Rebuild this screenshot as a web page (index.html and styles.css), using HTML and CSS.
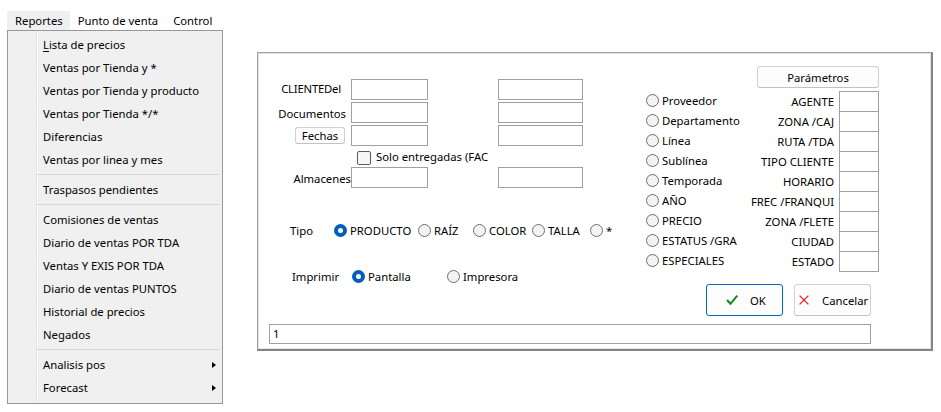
FILE: index.html
```html
<!DOCTYPE html>
<html lang="es">
<head>
<meta charset="utf-8">
<title>Reportes</title>
<link rel="stylesheet" href="styles.css">
</head>
<body>
<nav class="menubar">
  <span class="mb-item active">Reportes</span>
  <span class="mb-item">Punto de venta</span>
  <span class="mb-item">Control</span>
</nav>

<ul class="dropdown">
  <li class="mi"><span><u>L</u>ista de precios</span></li>
  <li class="mi">Ventas por Tienda y *</li>
  <li class="mi">Ventas por Tienda y producto</li>
  <li class="mi">Ventas por Tienda */*</li>
  <li class="mi">Diferencias</li>
  <li class="mi">Ventas por linea y mes</li>
  <li class="sep"></li>
  <li class="mi">Traspasos pendientes</li>
  <li class="sep"></li>
  <li class="mi">Comisiones de ventas</li>
  <li class="mi">Diario de ventas POR TDA</li>
  <li class="mi">Ventas Y EXIS POR TDA</li>
  <li class="mi">Diario de ventas PUNTOS</li>
  <li class="mi">Historial de precios</li>
  <li class="mi">Negados</li>
  <li class="sep"></li>
  <li class="mi sub">Analisis pos</li>
  <li class="mi sub">Forecast</li>
</ul>

<div class="dialog">
  <div class="dlg-top">
    <div class="dlg-left">
      <div class="filters">
        <span class="lbl l-cliente">CLIENTEDel</span><span class="tb"></span><span class="tb c4"></span>
        <span class="lbl l-docs">Documentos</span><span class="tb"></span><span class="tb c4"></span>
        <span class="lbl l-fechas"><span class="btn btn-fechas">Fechas</span></span><span class="tb"></span><span class="tb c4"></span>
        <span class="chk-row"><span class="chk"></span><span class="chk-text">Solo entregadas (FAC</span></span>
        <span class="lbl l-alm">Almacenes</span><span class="tb"></span><span class="tb c4"></span>
      </div>
      <div class="opt-row tipo">
        <span class="row-lbl">Tipo</span>
        <span class="opt w-prod"><span class="rb on"></span>PRODUCTO</span>
        <span class="opt w-raiz"><span class="rb"></span>RAÍZ</span>
        <span class="opt w-color"><span class="rb"></span>COLOR</span>
        <span class="opt w-talla"><span class="rb"></span>TALLA</span>
        <span class="opt"><span class="rb"></span>*</span>
      </div>
      <div class="opt-row imprimir">
        <span class="row-lbl">Imprimir</span>
        <span class="opt w-pant"><span class="rb on"></span>Pantalla</span>
        <span class="opt"><span class="rb"></span>Impresora</span>
      </div>
    </div>
    <div class="dlg-right">
      <div class="right-top">
        <div class="radios">
          <span class="opt"><span class="rb"></span>Proveedor</span>
          <span class="opt"><span class="rb"></span>Departamento</span>
          <span class="opt"><span class="rb"></span>Línea</span>
          <span class="opt"><span class="rb"></span>Sublínea</span>
          <span class="opt"><span class="rb"></span>Temporada</span>
          <span class="opt"><span class="rb"></span>AÑO</span>
          <span class="opt"><span class="rb"></span>PRECIO</span>
          <span class="opt"><span class="rb"></span>ESTATUS /GRA</span>
          <span class="opt"><span class="rb"></span>ESPECIALES</span>
        </div>
        <div class="params">
          <span class="btn btn-param">Parámetros</span>
          <div class="param-grid">
            <span class="plbl">AGENTE</span><span class="pbox"></span>
            <span class="plbl">ZONA /CAJ</span><span class="pbox"></span>
            <span class="plbl">RUTA /TDA</span><span class="pbox"></span>
            <span class="plbl">TIPO CLIENTE</span><span class="pbox"></span>
            <span class="plbl">HORARIO</span><span class="pbox"></span>
            <span class="plbl">FREC /FRANQUI</span><span class="pbox"></span>
            <span class="plbl">ZONA /FLETE</span><span class="pbox"></span>
            <span class="plbl">CIUDAD</span><span class="pbox"></span>
            <span class="plbl">ESTADO</span><span class="pbox"></span>
          </div>
        </div>
      </div>
      <div class="buttons">
        <span class="btn big ok">
          <svg class="ico-ok" width="12" height="10" viewBox="0 0 12 10"><path d="M1 5 L4.5 8.8 L11.3 0.6" fill="none" stroke="#138a13" stroke-width="2"/></svg>
          <span class="ok-text">OK</span>
        </span>
        <span class="btn big cancel">
          <svg class="ico-x" width="10" height="10" viewBox="0 0 10 10"><path d="M0.6 0.6 L9.4 9.4 M9.4 0.6 L0.6 9.4" fill="none" stroke="#e3211c" stroke-width="1.3"/></svg>
          <span class="cancel-text">Cancelar</span>
        </span>
      </div>
    </div>
  </div>
  <div class="status">1</div>
</div>
</body>
</html>
```
FILE: styles.css
```css
* { box-sizing: border-box; }
html, body { margin: 0; padding: 0; }
body {
  width: 941px;
  height: 412px;
  position: relative;
  overflow: hidden;
  background: #fff;
  color: #000;
  font-family: "Noto Sans", "DejaVu Sans", sans-serif;
  font-size: 11.3px;
}

/* ---------- menu bar ---------- */
.menubar {
  display: flex;
  height: 30px;
  padding: 11px 0 0 7px;
}
.mb-item {
  height: 19px;
  line-height: 19px;
  padding: 0 7px 0 8px;
  white-space: nowrap;
}
.mb-item.active { background: #f0f0f0; }

/* ---------- dropdown ---------- */
.dropdown {
  position: absolute;
  left: 7px;
  top: 30px;
  width: 216px;
  margin: 0;
  padding: 2px 0 4px;
  list-style: none;
  border: 1px solid #979797;
  background:
    linear-gradient(to right, transparent 28px, #e2e2e2 28px, #e2e2e2 29px, #fff 29px, #fff 30px, transparent 30px) no-repeat 0 1px / 100% calc(100% - 2px),
    #f0f0f0;
}
.mi {
  height: 23px;
  display: flex;
  align-items: center;
  padding-left: 35px;
  white-space: nowrap;
}
.mi u { text-decoration-thickness: 1px; text-underline-offset: 2px; }
.mi.sub::after {
  content: "";
  margin-left: auto;
  margin-right: 6px;
  border-left: 4px solid #000;
  border-top: 3.5px solid transparent;
  border-bottom: 3.5px solid transparent;
}
.sep {
  height: 7px;
  margin: 0 2px 0 29px;
  background: linear-gradient(transparent 3px, #d7d7d7 3px, #d7d7d7 4px, transparent 4px);
}

/* ---------- dialog ---------- */
.dialog {
  position: absolute;
  left: 257px;
  top: 52px;
  width: 676px;
  height: 299px;
  background: #fff;
  border-style: solid;
  border-width: 1px 2px 2px 1px;
  border-color: #a0a0a0 #858585 #858585 #a0a0a0;
  box-shadow: inset 1px 1px 0 #e3e3e3, inset -1px -1px 0 #e3e3e3;
}
.dlg-top { display: flex; align-items: flex-start; }
.dlg-left { width: 388px; flex: none; }

.filters {
  display: grid;
  grid-template-columns: 82px 77px 70px 85px;
  grid-template-rows: 21px 21px 21px 17px 21px;
  row-gap: 2px;
  margin: 26px 0 0 11px;
}
.lbl {
  display: flex;
  align-items: center;
  justify-content: flex-end;
  white-space: nowrap;
}
.l-cliente { margin-right: 10px; padding-bottom: 3px; letter-spacing: -0.2px; }
.l-docs { margin-right: 5px; padding-top: 1px; }
.l-fechas { margin-right: 6px; }
.l-alm { margin-right: 0; padding-top: 1px; }
.tb { border: 1px solid #a0a0a0; background: #fff; }
.c4 { grid-column: 4; }

.chk-row {
  grid-column: 2 / 5;
  display: flex;
  align-items: flex-end;
  padding-left: 6px;
  white-space: nowrap;
}
.chk {
  width: 14px;
  height: 14px;
  border: 1px solid #5c5c5c;
  border-radius: 2px;
  background: #f6f6f6;
  flex: none;
}
.chk-text { margin-left: 5px; line-height: 16px; }

.btn {
  display: inline-flex;
  align-items: center;
  justify-content: center;
  background: #fdfdfd;
  border: 1px solid #d0d0d0;
  border-bottom-color: #c2c2c2;
  border-radius: 3px;
  white-space: nowrap;
}
.btn-fechas { width: 50px; height: 17px; line-height: 15px; }

.opt-row {
  display: flex;
  align-items: center;
  height: 20px;
  white-space: nowrap;
}
.tipo { margin-top: 32px; padding-left: 32px; }
.tipo .row-lbl { width: 44px; }
.imprimir { margin-top: 26px; padding-left: 34px; }
.imprimir .row-lbl { width: 60px; }

.opt {
  display: flex;
  align-items: center;
  gap: 3px;
  white-space: nowrap;
}
.w-prod { width: 84px; }
.w-raiz { width: 55px; }
.w-color { width: 59px; }
.w-talla { width: 58px; }
.w-pant { width: 95px; }

.rb {
  width: 13px;
  height: 13px;
  border-radius: 50%;
  border: 1px solid #6e6e6e;
  background: #f3f3f3;
  flex: none;
}
.rb.on {
  border: 4px solid #005fb8;
  background: #fff;
}

/* right side */
.dlg-right { display: flex; flex-direction: column; }
.right-top { display: flex; align-items: flex-start; }
.radios {
  width: 111px;
  margin-top: 37px;
  display: flex;
  flex-direction: column;
}
.radios .opt {
  width: 95px;
  height: 20px;
  overflow: hidden;
}
.params { width: 122px; margin-top: 13px; }
.btn-param { width: 122px; height: 22px; }
.param-grid {
  display: grid;
  grid-template-columns: 82px 40px;
  grid-auto-rows: 20px;
  margin-top: 3px;
}
.plbl {
  display: flex;
  align-items: center;
  justify-content: flex-end;
  padding: 1px 5px 0 0;
  white-space: nowrap;
}
.pbox { height: 21px; border: 1px solid #a0a0a0; }

.buttons {
  display: flex;
  gap: 11px;
  margin: 13px 0 0 60px;
}
.btn.big {
  width: 77px;
  height: 32px;
  justify-content: flex-start;
}
.ok { border-color: #0067c0; }
.ico-ok { margin-left: 19px; }
.ok-text { margin-left: 12px; }
.ico-x { margin-left: 4px; }
.cancel-text { margin-left: 13px; }

.status {
  margin: 8px 0 0 11px;
  width: 602px;
  height: 20px;
  border: 1px solid #a0a0a0;
  padding-left: 3px;
  line-height: 18px;
}
```
